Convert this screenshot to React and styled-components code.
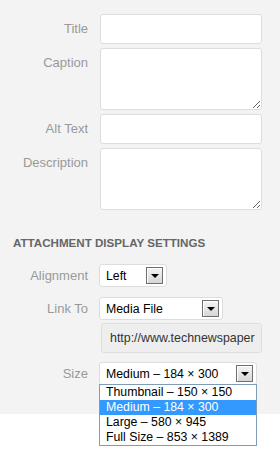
import styled, { createGlobalStyle } from 'styled-components'

const GlobalStyle = createGlobalStyle`
  body {
    margin: 0;
    background: #fff;
    font-family: "Liberation Sans", Arial, sans-serif;
  }
`

const Page = styled.div`
  height: 464px;
  background: #fff;
`

const Panel = styled.div`
  position: relative;
  height: 414px;
  box-sizing: border-box;
  padding-top: 14px;
  background: #f3f3f3;
`

const Row = styled.div`
  display: flex;
  align-items: ${(p) => (p.$center ? 'center' : 'flex-start')};
  margin-top: ${(p) => p.$mt || 0}px;
`

const Label = styled.label`
  width: 88px;
  margin-right: 12px;
  flex-shrink: 0;
  text-align: right;
  font-size: 13px;
  line-height: 16px;
  padding-top: ${(p) => (p.$top ? 7 : 0)}px;
  color: #999;
`

const TextInput = styled.input`
  box-sizing: border-box;
  width: 162px;
  height: 30px;
  margin: 0;
  border: 1px solid #ddd;
  border-radius: 3px;
  background: #fff;
  outline: none;
`

const TextArea = styled.textarea`
  box-sizing: border-box;
  width: 162px;
  height: 62px;
  margin: 0;
  border: 1px solid #ddd;
  border-radius: 3px;
  background: #fff;
  outline: none;
  resize: both;
`

const Heading = styled.h3`
  margin: 26px 0 0 13px;
  font-size: 11.6px;
  line-height: 14px;
  font-weight: bold;
  text-transform: uppercase;
  color: #666;
`

const Select = styled.div`
  position: relative;
  box-sizing: border-box;
  width: ${(p) => p.$w}px;
  height: 23px;
  margin-left: -1px;
  display: flex;
  align-items: center;
  justify-content: space-between;
  padding: 0 3px 0 6px;
  border: 1px solid #ddd;
  border-radius: 3px;
  background: #fff;
  font-size: 12.3px;
  color: #000;
  white-space: nowrap;
`

const ArrowButton = styled.span`
  box-sizing: border-box;
  width: 17px;
  height: 17px;
  display: flex;
  align-items: center;
  justify-content: center;
  border: 1px solid #6f6f6f;
  background: linear-gradient(#f4f4f4, #d6d6d6);
  box-shadow: inset 1px 1px 0 #fff;

  &::after {
    content: '';
    border-left: 4px solid transparent;
    border-right: 4px solid transparent;
    border-top: 4px solid #000;
    margin-top: 1px;
  }
`

const UrlBox = styled.div`
  box-sizing: border-box;
  width: 161px;
  height: 30px;
  margin-left: 101px;
  margin-top: 3px;
  padding: 0 8px;
  display: flex;
  align-items: center;
  overflow: hidden;
  white-space: nowrap;
  border: 1px solid #ddd;
  border-radius: 3px;
  background: #eee;
  font-size: 12.4px;
  color: #333;
`

const FieldWrap = styled.div`
  position: relative;
`

const OptionList = styled.ul`
  position: absolute;
  top: 22px;
  left: -1px;
  z-index: 2;
  box-sizing: border-box;
  width: 158px;
  margin: 0;
  padding: 0;
  list-style: none;
  border: 1px solid #7f9db9;
  background: #fff;
`

const Option = styled.li`
  height: 15px;
  line-height: 15px;
  padding-left: 6px;
  font-size: 12.3px;
  white-space: nowrap;
  color: ${(p) => (p.$active ? '#fff' : '#000')};
  background: ${(p) => (p.$active ? '#3399ff' : 'transparent')};
`

const sizes = [
  'Thumbnail – 150 × 150',
  'Medium – 184 × 300',
  'Large – 580 × 945',
  'Full Size – 853 × 1389',
]

function App() {
  return (
    <Page>
      <GlobalStyle />
      <Panel>
        <Row>
          <Label $top>Title</Label>
          <TextInput type="text" />
        </Row>
        <Row $mt={4}>
          <Label $top>Caption</Label>
          <TextArea />
        </Row>
        <Row $mt={4}>
          <Label $top>Alt Text</Label>
          <TextInput type="text" />
        </Row>
        <Row $mt={4}>
          <Label $top>Description</Label>
          <TextArea />
        </Row>

        <Heading>Attachment Display Settings</Heading>

        <Row $center $mt={14}>
          <Label>Alignment</Label>
          <Select $w={68}>
            Left
            <ArrowButton />
          </Select>
        </Row>
        <Row $center $mt={10}>
          <Label>Link To</Label>
          <Select $w={124}>
            Media File
            <ArrowButton />
          </Select>
        </Row>
        <UrlBox>http://www.technewspaper</UrlBox>
        <Row $center $mt={9}>
          <Label>Size</Label>
          <FieldWrap>
            <Select $w={158}>
              Medium – 184 × 300
              <ArrowButton />
            </Select>
            <OptionList>
              {sizes.map((s) => (
                <Option key={s} $active={s.startsWith('Medium')}>
                  {s}
                </Option>
              ))}
            </OptionList>
          </FieldWrap>
        </Row>
      </Panel>
    </Page>
  )
}

export default App
